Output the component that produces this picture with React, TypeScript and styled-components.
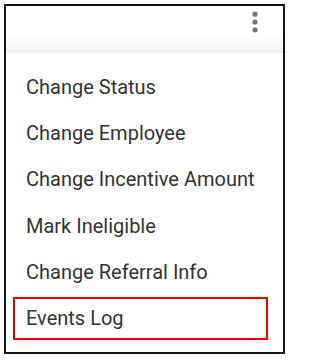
import React from 'react';
import styled, {createGlobalStyle} from 'styled-components';

const GlobalStyle = createGlobalStyle`
  html, body {
    margin: 0;
    padding: 0;
    background: #fff;
  }
  body {
    font-family: Roboto, 'Liberation Sans', Arial, sans-serif;
  }
`

const Frame = styled.div`
  box-sizing: border-box;
  width: 281px;
  height: 350px;
  margin: 4px;
  border: 2px solid #151515;
  background: #fff;
  display: flex;
  flex-direction: column;
`

const Header = styled.div`
  height: 47px;
  flex-shrink: 0;
  display: flex;
  justify-content: flex-end;
  align-items: flex-start;
  padding: 4px 23px 0 0;
  box-sizing: border-box;
  background: linear-gradient(to bottom, #fff 0%, #fff 62%, #f1f1f1 100%);
`

const MenuList = styled.ul`
  list-style: none;
  margin: 0;
  padding: 12.5px 0 0;
  display: flex;
  flex-direction: column;
  gap: 3.4px;
`

const MenuItem = styled.li<{$highlighted?: boolean}>`
  box-sizing: border-box;
  height: 43px;
  margin: 0 15px 0 7px;
  padding-left: 11px;
  border: 2px solid ${({$highlighted}) => ($highlighted ? '#f20000' : 'transparent')};
  font-size: 20px;
  line-height: 39px;
  color: #333;
  white-space: nowrap;
`

const MoreIcon = () => (
  <svg width='10' height='24' viewBox='0 0 10 24'>
    <circle cx='5' cy='4.2' r='2.6' fill='#777' />
    <circle cx='5' cy='12' r='2.6' fill='#777' />
    <circle cx='5' cy='19.8' r='2.6' fill='#777' />
  </svg>
);

const items = [
  'Change Status',
  'Change Employee',
  'Change Incentive Amount',
  'Mark Ineligible',
  'Change Referral Info',
  'Events Log',
];

export default function App() {
  return (
    <>
      <GlobalStyle />
      <Frame>
        <Header>
          <MoreIcon />
        </Header>
        <MenuList>
          {items.map((item) => (
            <MenuItem key={item} $highlighted={item === 'Events Log'}>
              {item}
            </MenuItem>
          ))}
        </MenuList>
      </Frame>
    </>
  );
}
